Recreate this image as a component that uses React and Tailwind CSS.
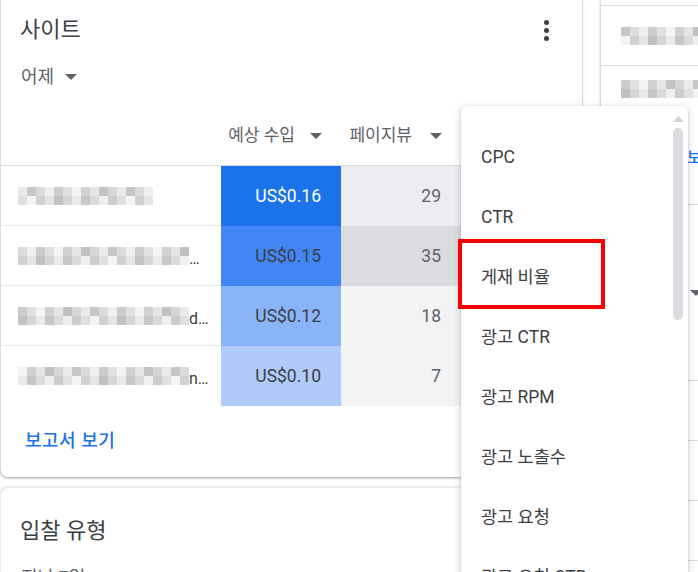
import React from "react";

const rows = [
  { cols: 15, tail: "", earn: "US$0.16", pv: "29", earnBg: "bg-[#1a73e8]", earnText: "text-white", pvBg: "bg-[#ebedf0]" },
  { cols: 19, tail: "…", earn: "US$0.15", pv: "35", earnBg: "bg-[#4285f4]", earnText: "text-[#3c4043]", pvBg: "bg-[#dadce0]" },
  { cols: 19, tail: "d…", earn: "US$0.12", pv: "18", earnBg: "bg-[#8ab4f8]", earnText: "text-[#3c4043]", pvBg: "bg-[#f1f3f4]" },
  { cols: 19, tail: "n…", earn: "US$0.10", pv: "7", earnBg: "bg-[#aecbfa]", earnText: "text-[#3c4043]", pvBg: "bg-[#f1f3f4]" },
];

const menuItems = ["CPC", "CTR", "게재 비율", "광고 CTR", "광고 RPM", "광고 노출수", "광고 요청", "광고 요청 CTR"];

// blurred (pixelated) site names
function Mosaic({ cols, seed }) {
  const cells = [];
  for (let r = 0; r < 2; r++) {
    for (let c = 0; c < cols; c++) {
      const v = 194 + ((c * 37 + r * 53 + seed * 19) % 11) * 5;
      cells.push(<div key={`${r}-${c}`} className="w-[9px] h-[9px]" style={{ background: `rgb(${v},${v},${v + 1})` }} />);
    }
  }
  return (
    <div className="grid shrink-0" style={{ gridTemplateColumns: `repeat(${cols}, 9px)` }}>
      {cells}
    </div>
  );
}

function Caret({ className = "" }) {
  return (
    <svg width="12" height="6" viewBox="0 0 12 6" className={className}>
      <path d="M0 0h12L6 6z" fill="#5f6368" />
    </svg>
  );
}

function SitesCard() {
  return (
    <div className="bg-white rounded-b-lg border-l border-[#dadce0] shadow-[0_1px_2px_rgba(60,64,67,0.3),0_1px_3px_1px_rgba(60,64,67,0.15)]">
      <div className="flex items-center justify-between pl-[19px] pr-[24px] pt-[14px]">
        <h2 className="text-[22px] leading-8 text-[#3c4043]">사이트</h2>
        <div className="w-6 h-6 flex flex-col items-center justify-center gap-[3px]">
          <span className="w-[5px] h-[5px] rounded-full bg-[#3c4043]" />
          <span className="w-[5px] h-[5px] rounded-full bg-[#3c4043]" />
          <span className="w-[5px] h-[5px] rounded-full bg-[#3c4043]" />
        </div>
      </div>
      <div className="flex items-center gap-[11px] pl-[20px] mt-[19px] text-[18px] leading-6 text-[#5f6368]">
        어제
        <Caret />
      </div>

      <div className="mt-[17px]">
        <div className="flex h-[60px] border-b border-[#dadce0] text-[17px] text-[#5f6368]">
          <div className="w-[220px]" />
          <div className="w-[120px] flex items-center justify-end pr-[19px] gap-[15px]">
            예상 수입
            <Caret />
          </div>
          <div className="w-[120px] flex items-center justify-end pr-[19px] gap-[18px]">
            페이지뷰
            <Caret />
          </div>
        </div>
        {rows.map((row, i) => (
          <div key={i} className="flex h-[60px] text-[17.5px]">
            <div className={`w-[220px] flex items-center pl-[17px] overflow-hidden text-[#3c4043] ${i < 3 ? "border-b border-[#e8eaed]" : ""}`}>
              <Mosaic cols={row.cols} seed={i + 1} />
              <span className="text-base leading-none pt-[6px]">{row.tail}</span>
            </div>
            <div className={`w-[120px] flex items-center justify-end pr-5 ${row.earnBg} ${row.earnText}`}>{row.earn}</div>
            <div className={`w-[120px] flex items-center justify-end pr-5 text-[#5f6368] ${row.pvBg}`}>{row.pv}</div>
            <div className="flex-1" />
          </div>
        ))}
      </div>

      <div className="pl-[24px] pt-[23px] pb-[23px]">
        <a className="text-[18px] leading-6 tracking-[0.5px] font-medium text-[#1a73e8]">보고서 보기</a>
      </div>
    </div>
  );
}

function BidCard() {
  return (
    <div className="mt-[10px] bg-white rounded-t-lg border border-[#e8eaed] h-[120px] shadow-[0_1px_2px_rgba(60,64,67,0.3),0_1px_3px_1px_rgba(60,64,67,0.15)]">
      <h2 className="pl-[19px] pt-[27px] text-[22px] leading-8 text-[#3c4043]">입찰 유형</h2>
      <div className="pl-[20px] mt-[19px] text-[18px] leading-6 text-[#5f6368]">지난 7일</div>
    </div>
  );
}

function SideCard() {
  return (
    <div className="bg-white border-l border-[#dadce0] h-full flex flex-col shadow-[0_1px_2px_rgba(60,64,67,0.3)]">
      <div className="h-[6px] border-b border-[#dadce0]" />
      <div className="h-[60px] border-b border-[#dadce0] flex items-center pl-[20px]">
        <Mosaic cols={9} seed={7} />
      </div>
      <div className="h-[139px] border-b border-[#dadce0] pl-[20px] pt-[14px]">
        <Mosaic cols={9} seed={3} />
        <a className="block mt-[48px] ml-[66px] whitespace-nowrap text-base font-medium text-[#1a73e8]">보고서 보기</a>
      </div>
      <div className="h-[176px] border-b border-[#dadce0] flex items-center pl-[89px]">
        <Caret />
      </div>
      <div className="h-[60px] border-b border-[#dadce0]" />
      <div className="h-[60px] border-b border-[#dadce0]" />
      <div className="h-[60px] border-b border-[#dadce0]" />
      <div className="flex-1" />
    </div>
  );
}

function MetricMenu() {
  return (
    <div className="absolute left-[461px] top-[106px] w-[227px] h-[480px] bg-white rounded-t-md shadow-[0_2px_6px_2px_rgba(60,64,67,0.15),0_1px_2px_rgba(60,64,67,0.3)] overflow-hidden">
      <ul className="pt-[21px]">
        {menuItems.map((item) => (
          <li key={item} className="h-[60px] flex items-center pl-5 text-[17.5px] text-[#3c4043]">
            {item}
          </li>
        ))}
      </ul>
      <svg width="11" height="6" viewBox="0 0 11 6" className="absolute left-[212px] top-[10px]">
        <path d="M0 6L5.5 0 11 6z" fill="#d2d4d7" />
      </svg>
      <div className="absolute left-[212px] top-[22px] w-[10px] h-[192px] rounded-full bg-[#dadce0]" />
    </div>
  );
}

export default function App() {
  return (
    <div className="relative w-[698px] h-[572px] overflow-hidden bg-white font-['Roboto','Noto_Sans_CJK_KR',sans-serif]">
      <div className="flex h-full">
        <div className="w-[582px] shrink-0">
          <SitesCard />
          <BidCard />
        </div>
        <div className="ml-[18px] flex-1 min-w-[200px]">
          <SideCard />
        </div>
      </div>
      <MetricMenu />
      <div className="absolute left-[458px] top-[239px] w-[147px] h-[70px] border-4 border-[#ff0000]" />
    </div>
  );
}
